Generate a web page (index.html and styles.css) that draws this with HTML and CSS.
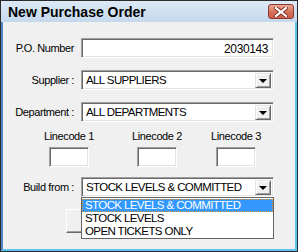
FILE: index.html
```html
<!DOCTYPE html>
<html lang="en">
<head>
    <meta charset="UTF-8">
    <title>New Purchase Order</title>
    <link rel="stylesheet" href="styles.css">
</head>
<body>
    <div class="window">
        <div class="titlebar">
            <span class="title">New Purchase Order</span>
            <span class="close">
                <svg width="14" height="10" viewBox="0 0 14 10">
                    <path d="M2 1 L12 9 M12 1 L2 9" stroke="#7a2a20" stroke-width="4" stroke-linecap="square"/>
                    <path d="M2 1 L12 9 M12 1 L2 9" stroke="#ffffff" stroke-width="2.2" stroke-linecap="square"/>
                </svg>
            </span>
        </div>
        <div class="content">
            <div class="row">
                <label class="label">P.O. Number</label>
                <div class="field text">2030143</div>
            </div>
            <div class="row">
                <label class="label">Supplier :</label>
                <div class="field combo"><span class="value">ALL SUPPLIERS</span><span class="drop"></span></div>
            </div>
            <div class="row">
                <label class="label">Department :</label>
                <div class="field combo"><span class="value">ALL DEPARTMENTS</span><span class="drop"></span></div>
            </div>
            <div class="linecodes">
                <div class="linecode lc1"><span>Linecode 1</span><div class="field small"></div></div>
                <div class="linecode lc2"><span>Linecode 2</span><div class="field small"></div></div>
                <div class="linecode lc3"><span>Linecode 3</span><div class="field small"></div></div>
            </div>
            <div class="row build">
                <label class="label">Build from :</label>
                <div class="field combo open">
                    <span class="value">STOCK LEVELS &amp; COMMITTED</span><span class="drop"></span>
                    <ul class="options">
                        <li class="selected">STOCK LEVELS &amp; COMMITTED</li>
                        <li>STOCK LEVELS</li>
                        <li>OPEN TICKETS ONLY</li>
                    </ul>
                </div>
            </div>
            <div class="actions">
                <button class="btn" type="button"></button>
            </div>
        </div>
    </div>
</body>
</html>
```

FILE: styles.css
```css
body {
    margin: 0;
    font-family: "Liberation Sans", Arial, sans-serif;
    font-size: 11px;
    letter-spacing: -0.4px;
    color: #000;
}

.window {
    width: 298px;
    height: 252px;
    box-sizing: border-box;
    border: 1px solid #2b2b2b;
    background: #f0f0f0;
    display: flex;
    flex-direction: column;
}

.titlebar {
    height: 21px;
    display: flex;
    align-items: center;
    justify-content: space-between;
    background: linear-gradient(#dde9f6, #c5d8ec);
    padding: 0 3px 0 7px;
}

.title {
    font-weight: bold;
    font-size: 14px;
    letter-spacing: 0;
}

.close {
    width: 24px;
    height: 13px;
    border: 1px solid #8a3a30;
    border-radius: 3px;
    background: linear-gradient(#eba594, #d6705a 55%, #cc5f48);
    display: flex;
    align-items: center;
    justify-content: center;
}

.content {
    flex: 1;
    border: 2px solid #5cc4ee;
    border-top: none;
    border-left-color: #4f86c6;
    padding-top: 16px;
    position: relative;
}

.row {
    display: flex;
    align-items: center;
    margin-bottom: 12px;
}

.label {
    width: 71px;
    text-align: right;
    margin-right: 7px;
    white-space: nowrap;
}

.field {
    box-sizing: border-box;
    height: 20px;
    background: #fff;
    border: 1px solid;
    border-color: #a0a0a0 #fff #fff #a0a0a0;
    box-shadow: inset 1px 1px 0 #696969, inset -1px -1px 0 #e3e3e3;
}

.text {
    width: 193px;
    text-align: right;
    padding: 3px 5px 0 0;
    font-size: 12px;
}

.combo {
    width: 193px;
    display: flex;
    align-items: center;
    justify-content: space-between;
    position: relative;
    font-size: 11.5px;
    letter-spacing: -0.6px;
    padding: 0 2px 0 4px;
    white-space: nowrap;
}

.drop {
    width: 16px;
    height: 15px;
    box-sizing: border-box;
    background: #f0f0f0;
    border: 1px solid;
    border-color: #e3e3e3 #696969 #696969 #e3e3e3;
    box-shadow: inset 1px 1px 0 #fff, inset -1px -1px 0 #a0a0a0;
    position: relative;
}

.drop::after {
    content: "";
    position: absolute;
    left: 3px;
    top: 5px;
    border-left: 4px solid transparent;
    border-right: 4px solid transparent;
    border-top: 4px solid #000;
}

.linecodes {
    display: flex;
    margin-top: -4px;
}

.linecode {
    width: 60px;
    display: flex;
    flex-direction: column;
    align-items: center;
    gap: 5px;
}

.lc1 { margin-left: 36px; }
.lc2 { margin-left: 28px; }
.lc3 { margin-left: 19px; }

.small {
    width: 40px;
}

.build {
    margin-top: 10px;
}

.options {
    position: absolute;
    left: -1px;
    top: 19px;
    width: 193px;
    box-sizing: border-box;
    margin: 0;
    padding: 1px 0 0;
    list-style: none;
    background: #fff;
    border: 1px solid #646464;
    z-index: 2;
}

.options li {
    height: 13px;
    line-height: 13px;
    padding-left: 3px;
}

.options .selected {
    background: #3399ff;
    color: #fff;
    outline: 1px dotted #e8902a;
    outline-offset: -1px;
}

.actions {
    padding-left: 63px;
}

.btn {
    width: 75px;
    height: 24px;
    background: #f0f0f0;
    border: 1px solid;
    border-color: #fff #696969 #696969 #fff;
    box-shadow: inset -1px -1px 0 #a0a0a0;
}
```
